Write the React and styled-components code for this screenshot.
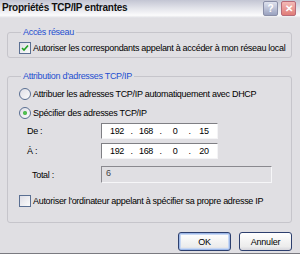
import styled, { createGlobalStyle } from 'styled-components'

const GlobalStyle = createGlobalStyle`
  html, body {
    margin: 0;
    padding: 0;
    background: #e0dfe3;
  }
  body {
    font-family: "Liberation Sans", Arial, sans-serif;
    font-size: 9px;
    letter-spacing: -0.3px;
    color: #000;
  }
`

const Window = styled.div`
  width: 300px;
  height: 254px;
  box-sizing: border-box;
  background: #e0dfe3;
  border-bottom: 1px solid #7a7a80;
  display: flex;
  flex-direction: column;
  overflow: hidden;
`

const TitleBar = styled.div`
  height: 18px;
  display: flex;
  align-items: center;
  padding: 0 4px 0 2px;
  background: linear-gradient(#c3c5d3 0%, #e2e3ea 45%, #fbfbfc 85%, #dedee3 100%);
`

const Title = styled.div`
  flex: 1;
  font-weight: bold;
  font-size: 10px;
  letter-spacing: -0.25px;
  color: #111;
  margin-top: -3px;
`

const TitleButton = styled.div`
  width: 13px;
  height: 13px;
  margin-left: 3px;
  border-radius: 2px;
  border: 1px solid ${({ $close }) => ($close ? '#b86a78' : '#8a8fa8')};
  background: ${({ $close }) =>
    $close
      ? 'linear-gradient(#f3b9b6, #e07c78)'
      : 'linear-gradient(#dfe2ee, #9aa2c0)'};
  color: #fff;
  font-size: 10px;
  font-weight: bold;
  display: flex;
  align-items: center;
  justify-content: center;
  margin-top: -2px;
`

const Body = styled.div`
  flex: 1;
  display: flex;
  flex-direction: column;
  padding: 8px 8px 0 7px;
`

const Group = styled.fieldset`
  margin: 0 0 ${({ $gap }) => $gap || 0}px;
  padding: ${({ $pad }) => $pad};
  border: 1px solid #c6c5cb;
  border-radius: 3px;
  display: flex;
  flex-direction: column;
  min-width: 0;
`

const Legend = styled.legend`
  color: #1f4fd0;
  padding: 0 2px;
  margin-left: 2px;
  line-height: 13px;
`

const Row = styled.div`
  display: flex;
  align-items: center;
  height: ${({ $h }) => $h || 13}px;
  margin-top: ${({ $mt }) => $mt || 0}px;
`

const Box = styled.span`
  width: 10px;
  height: 10px;
  flex: none;
  border: 1px solid #5a6f92;
  border-radius: ${({ $round }) => ($round ? '50%' : '0')};
  background: linear-gradient(135deg, #dedee6, #fbfbfb);
  display: flex;
  align-items: center;
  justify-content: center;
  margin-right: 2px;
`

const Dot = styled.span`
  width: 4px;
  height: 4px;
  border-radius: 50%;
  background: radial-gradient(#5fcf5f, #219b21);
`

const Label = styled.span`
  white-space: nowrap;
`

const FieldLabel = styled.span`
  width: ${({ $w }) => $w}px;
  padding-left: ${({ $indent }) => $indent}px;
  box-sizing: border-box;
  flex: none;
`

const IpBox = styled.div`
  width: 117px;
  height: 16px;
  box-sizing: border-box;
  padding-left: 3px;
  background: #fff;
  border: 1px solid #7f7f84;
  border-right-color: #f4f4f6;
  border-bottom-color: #f4f4f6;
  display: flex;
  align-items: center;
`

const Octet = styled.span`
  width: 24px;
  text-align: center;
`

const Sep = styled.span`
  width: 5px;
  text-align: center;
`

const TotalBox = styled.div`
  width: 171px;
  height: 17px;
  box-sizing: border-box;
  background: #e0dfe3;
  border: 1px solid #8a898f;
  border-right-color: #f6f6f8;
  border-bottom-color: #f6f6f8;
  padding: 1px 0 0 4px;
  color: #444;
`

const Buttons = styled.div`
  display: flex;
  justify-content: flex-end;
  gap: 8px;
  margin-top: 9px;
`

const Button = styled.button`
  width: 53px;
  height: 19px;
  font-family: "Liberation Sans", Arial, sans-serif;
  font-size: 9px;
  letter-spacing: -0.2px;
  color: #000;
  border: 1px solid #2d3f6e;
  border-radius: 3px;
  background: linear-gradient(#ffffff, #ececec 80%, #d6d6dc);
  box-shadow: ${({ $default }) =>
    $default ? 'inset 0 0 0 1px #9db8e8, inset 0 0 0 2px #c8d8f4' : 'none'};
  padding: 0;
`

function Check({ checked }) {
  return (
    <Box>
      {checked && (
        <svg width="8" height="8" viewBox="0 0 8 8">
          <path d="M1 4 L3 6 L7 1.5" fill="none" stroke="#21a121" strokeWidth="1.6" />
        </svg>
      )}
    </Box>
  )
}

function Radio({ checked }) {
  return <Box $round>{checked && <Dot />}</Box>
}

function Ip({ last }) {
  return (
    <IpBox>
      <Octet>192</Octet>
      <Sep>.</Sep>
      <Octet>168</Octet>
      <Sep>.</Sep>
      <Octet>0</Octet>
      <Sep>.</Sep>
      <Octet>{last}</Octet>
    </IpBox>
  )
}

export default function App() {
  return (
    <Window>
      <GlobalStyle />
      <TitleBar>
        <Title>Propriétés TCP/IP entrantes</Title>
        <TitleButton>?</TitleButton>
        <TitleButton $close>✕</TitleButton>
      </TitleBar>
      <Body>
        <Group $pad="2px 11px 3px" $gap={12}>
          <Legend>Accès réseau</Legend>
          <Row>
            <Check checked />
            <Label>Autoriser les correspondants appelant à accéder à mon réseau local</Label>
          </Row>
        </Group>
        <Group $pad="4px 11px 15px">
          <Legend>Attribution d'adresses TCP/IP</Legend>
          <Row>
            <Radio />
            <Label>Attribuer les adresses TCP/IP automatiquement avec DHCP</Label>
          </Row>
          <Row $mt={6}>
            <Radio checked />
            <Label>Spécifier des adresses TCP/IP</Label>
          </Row>
          <Row $h={16} $mt={4}>
            <FieldLabel $w={82} $indent={8}>De :</FieldLabel>
            <Ip last="15" />
          </Row>
          <Row $h={16} $mt={4}>
            <FieldLabel $w={82} $indent={8}>À :</FieldLabel>
            <Ip last="20" />
          </Row>
          <Row $h={17} $mt={7}>
            <FieldLabel $w={82} $indent={13}>Total :</FieldLabel>
            <TotalBox>6</TotalBox>
          </Row>
          <Row $mt={11}>
            <Check />
            <Label>Autoriser l'ordinateur appelant à spécifier sa propre adresse IP</Label>
          </Row>
        </Group>
        <Buttons>
          <Button $default>OK</Button>
          <Button>Annuler</Button>
        </Buttons>
      </Body>
    </Window>
  )
}
